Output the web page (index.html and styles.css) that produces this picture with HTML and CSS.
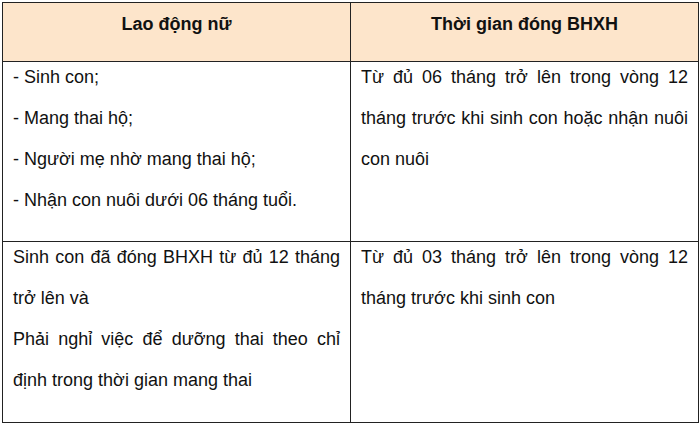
FILE: index.html
```html
<!DOCTYPE html>
<html lang="vi">
<head>
<meta charset="utf-8">
<link rel="stylesheet" href="styles.css">
</head>
<body>
<table class="grid">
  <colgroup><col class="c1"><col class="c2"></colgroup>
  <tr class="head">
    <th>Lao động nữ</th>
    <th>Thời gian đóng BHXH</th>
  </tr>
  <tr class="r1">
    <td>
      <div class="cell">
        <p>- Sinh con;</p>
        <p>- Mang thai hộ;</p>
        <p>- Người mẹ nhờ mang thai hộ;</p>
        <p>- Nhận con nuôi dưới 06 tháng tuổi.</p>
      </div>
    </td>
    <td class="just">
      <div class="cell">
        <p>Từ đủ 06 tháng trở lên trong vòng 12 tháng trước khi sinh con hoặc nhận nuôi con nuôi</p>
      </div>
    </td>
  </tr>
  <tr class="r2">
    <td class="just">
      <div class="cell">
        <p>Sinh con đã đóng BHXH từ đủ 12 tháng trở lên và</p>
        <p>Phải nghỉ việc để dưỡng thai theo chỉ định trong thời gian mang thai</p>
      </div>
    </td>
    <td class="just">
      <div class="cell">
        <p>Từ đủ 03 tháng trở lên trong vòng 12 tháng trước khi sinh con</p>
      </div>
    </td>
  </tr>
</table>
</body>
</html>
```

FILE: styles.css
```css
html, body {
  margin: 0;
  padding: 0;
  background: #ffffff;
}
body {
  padding: 2px 0 0 2px;
  font-family: "Liberation Sans", Arial, sans-serif;
  color: #111111;
}
.grid {
  border-collapse: collapse;
  width: 696px;
  table-layout: fixed;
}
.c1 { width: 348px; }
.c2 { width: 348px; }
.grid th, .grid td {
  border: 1px solid #222222;
  vertical-align: top;
  padding: 0 10px;
}
.head th {
  background: #fde5cb;
  height: 57px;
  font-size: 18px;
  font-weight: bold;
  line-height: 40px;
  text-align: center;
  padding-top: 1px;
}
.r1 td { height: 179px; }
.r2 td { height: 180px; }
.grid td {
  font-size: 18px;
  line-height: 41px;
}
.cell {
  margin-top: -5px;
}
.grid p {
  margin: 0;
}
.just p {
  text-align: justify;
}
```
